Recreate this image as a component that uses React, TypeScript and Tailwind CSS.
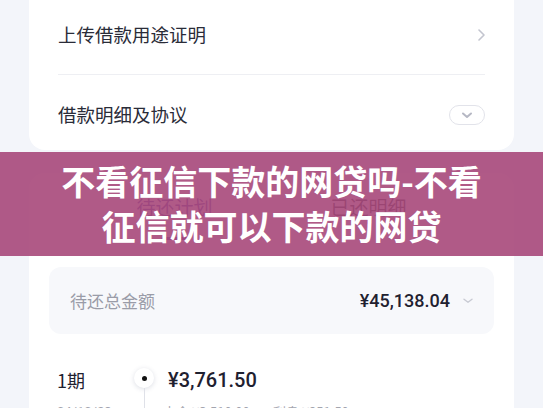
import React from "react";

const cjk = { fontFamily: '"Noto Sans CJK SC", "Noto Sans", sans-serif' };
const num = { fontFamily: 'Roboto, "Noto Sans CJK SC", sans-serif' };

export default function App() {
  return (
    <div className="relative h-[408px] w-[543px] overflow-hidden bg-[#f3f5fa]" style={cjk}>
      <div className="px-[29px]">
        {/* Card 1 */}
        <div className="rounded-b-[16px] bg-white px-[29px]">
          <div className="flex h-[74px] items-center justify-between pb-[4px]">
            <span className="text-[18.5px] text-[#2a2c38]">上传借款用途证明</span>
            <svg width="7" height="12" viewBox="0 0 7 12" className="mr-[0px]">
              <path d="M1 1l5 5-5 5" fill="none" stroke="#c3c5cf" strokeWidth="1.6" strokeLinecap="round" strokeLinejoin="round" />
            </svg>
          </div>
          <div className="h-px bg-[#eeeff3]" />
          <div className="flex h-[75px] items-center justify-between pt-[5px]">
            <span className="text-[18.5px] text-[#2a2c38]">借款明细及协议</span>
            <div className="flex h-[20px] w-[36px] items-center justify-center rounded-full border border-[#e2e3ea]">
              <svg width="12" height="7" viewBox="0 0 12 7">
                <path d="M2 1.5l4 3.5 4-3.5" fill="none" stroke="#b6b8c4" strokeWidth="2" strokeLinecap="round" strokeLinejoin="round" />
              </svg>
            </div>
          </div>
        </div>

        {/* Card 2 */}
        <div className="mt-[23px] rounded-t-[16px] bg-white pb-[20px]">
          <div className="flex h-[68px] items-center justify-center gap-[94px]">
            <div className="relative flex h-full w-[100px] items-center justify-center">
              <span className="text-[19px] text-[#4b3fa8]">待还计划</span>
              <div className="absolute bottom-[1px] left-1/2 h-[3px] w-[27px] -translate-x-1/2 rounded-full bg-[#4b3fa8]" />
            </div>
            <div className="flex h-full w-[100px] items-center justify-center">
              <span className="text-[19px] text-[#2a2c38]">已还明细</span>
            </div>
          </div>

          <div className="mx-[20px] mt-[26px] flex h-[67px] items-center justify-between rounded-[12px] bg-[#f7f8fb] pl-[21px] pr-[21px]">
            <span className="text-[17px] text-[#9a9ca8]">待还总金额</span>
            <div className="flex items-center gap-[13px]">
              <span className="text-[18px] font-medium text-[#1f2130]" style={num}>¥45,138.04</span>
              <svg width="10" height="6" viewBox="0 0 10 6">
                <path d="M1 1.2l4 3 4-3" fill="none" stroke="#c8cad3" strokeWidth="1.4" strokeLinecap="round" strokeLinejoin="round" />
              </svg>
            </div>
          </div>

          <div className="mt-[34px] flex pl-[28px]">
            <div className="w-[77px]">
              <div className="text-[18px] leading-[24px] text-[#1f2130]">1期</div>
              <div className="mt-[11px] text-[13px] leading-[18px] text-[#a3a5af]" style={num}>04/10/23</div>
            </div>
            <div className="flex w-[20px] flex-col items-center">
              <div className="flex h-[20px] w-[20px] items-center justify-center rounded-full bg-white shadow-[0_1px_5px_rgba(60,70,110,0.18)]">
                <div className="h-[5px] w-[5px] rounded-full bg-[#111]" />
              </div>
              <div className="w-px flex-1 bg-[#dfe1e8]" />
            </div>
            <div className="ml-[14px]">
              <div className="text-[20px] font-medium leading-[24px] text-[#1f2130]" style={num}>¥3,761.50</div>
              <div className="ml-[-5px] mt-[11px] flex text-[13px] leading-[18px] text-[#a3a5af]">
                <span className="w-[110px]">本金 ¥3,510.00</span>
                <span>利息 ¥251.50</span>
              </div>
            </div>
          </div>
        </div>
      </div>

      {/* Overlay banner */}
      <div className="absolute inset-x-0 top-[152px] flex h-[104px] flex-col items-center justify-center bg-[#a7487a]/90 pb-[3px]">
        <div className="text-center text-[34px] font-bold leading-[45px] text-white">
          不看征信下款的网贷吗-不看
          <br />
          征信就可以下款的网贷
        </div>
      </div>
    </div>
  );
}
